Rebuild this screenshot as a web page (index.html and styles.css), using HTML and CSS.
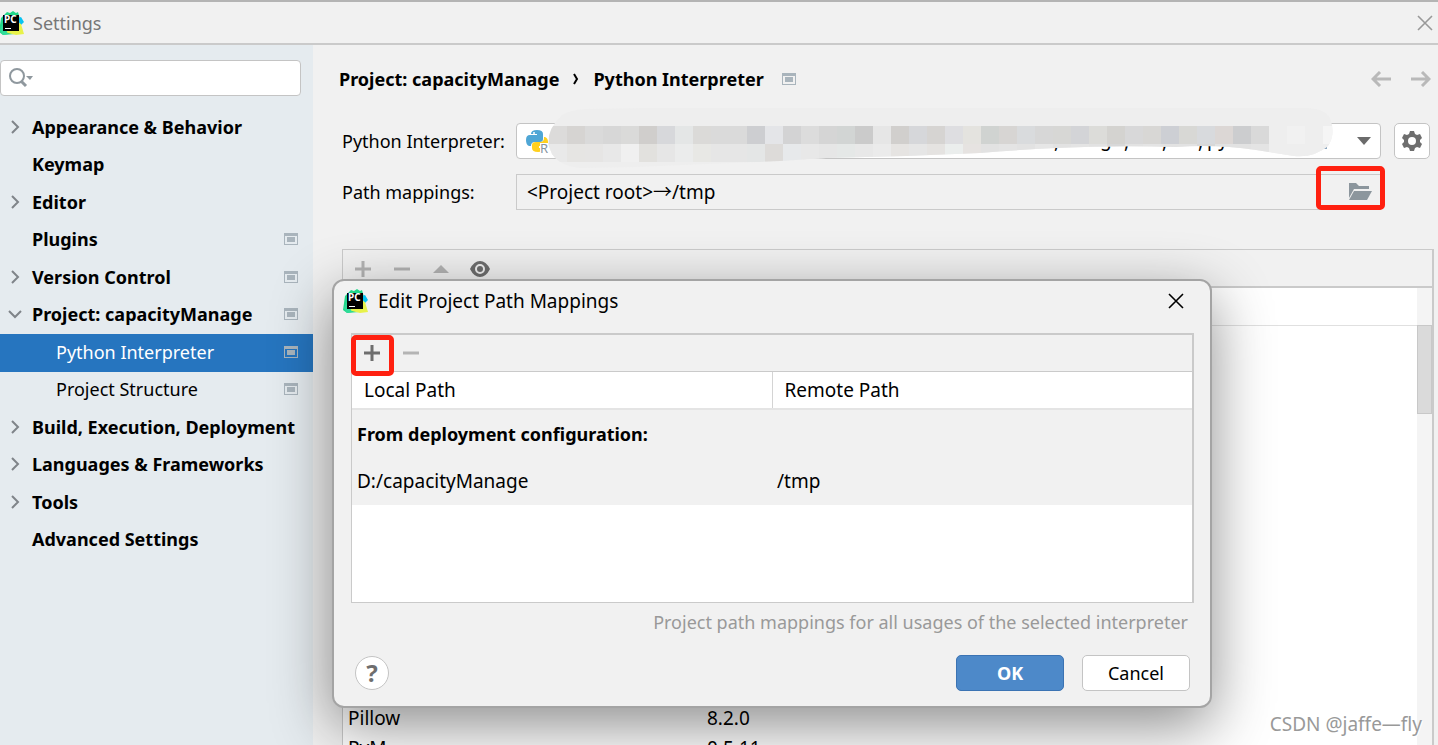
FILE: index.html
```html
<!DOCTYPE html>
<html lang="en">
<head>
    <meta charset="UTF-8">
    <meta name="viewport" content="width=device-width, initial-scale=1.0">
    <title>Settings</title>
    <link rel="stylesheet" href="styles.css">
</head>
<body>
    <!-- shared icons -->
    <svg class="defs" aria-hidden="true">
        <symbol id="pycharm" viewBox="0 0 24 24" overflow="visible">
            <path d="M1 7 7 1l3 1 3-2 3 2 2-1 2 7-5 15-12 1-4-3z" fill="#21d789"/>
            <path d="M18 7l3-1 3 5-4 4z" fill="#07c3f2"/>
            <path d="M19 12l2 1 3 10-8 1-8-2-5 1-1-3 14-3z" fill="#e8f24a"/>
            <path d="M0 19l3-7 5 11-5 1z" fill="#2fdc9a"/>
            <rect x="3" y="4" width="16" height="16"/>
            <text x="4" y="12" font-size="10" font-weight="700" fill="#fff">PC</text>
            <path d="M5 17h6v1H5z" fill="#fff"/>
        </symbol>
        <symbol id="win" viewBox="0 0 14 12">
            <path d="M0 0h14v12H0zM1 3v8h12V3z" fill="#a9b4bc" fill-rule="evenodd"/>
            <path d="M3 4h8v5H3z" fill="#a9b4bc"/>
        </symbol>
        <symbol id="right" viewBox="0 0 14 14">
            <path d="M4 1l6 6-6 6" fill="none" stroke="#7f8489" stroke-width="2"/>
        </symbol>
        <symbol id="down" viewBox="0 0 14 14">
            <path d="M1 4l6 6 6-6" fill="none" stroke="#7f8489" stroke-width="2"/>
        </symbol>
        <symbol id="plus" viewBox="0 0 16 16">
            <path d="M8 0v16M0 8h16" fill="none" stroke="currentColor" stroke-width="3"/>
        </symbol>
        <symbol id="minus" viewBox="0 0 16 16">
            <path d="M0 8h16" fill="none" stroke="currentColor" stroke-width="3"/>
        </symbol>
        <symbol id="close" viewBox="0 0 16 16">
            <path d="M1 1l14 14M15 1L1 15" fill="none" stroke="currentColor" stroke-width="1.6"/>
        </symbol>
    </svg>

    <header class="titlebar">
        <svg class="logo"><use href="#pycharm"/></svg>
        <h1>Settings</h1>
        <button class="close" aria-label="Close"><svg><use href="#close"/></svg></button>
    </header>

    <div class="main">
        <nav class="sidebar">
            <label class="search">
                <svg viewBox="0 0 26 20">
                    <circle cx="9" cy="8" r="7" fill="none" stroke="#8f989e" stroke-width="2"/>
                    <path d="M13 13l5 5" stroke="#8f989e" stroke-width="3"/>
                    <path d="M18 8h7l-3 4z" fill="#8f989e"/>
                </svg>
                <input type="text" aria-label="Search settings">
            </label>
            <ul class="tree">
                <li><svg class="arrow"><use href="#right"/></svg><a href="#">Appearance &amp; Behavior</a></li>
                <li><a href="#">Keymap</a></li>
                <li><svg class="arrow"><use href="#right"/></svg><a href="#">Editor</a></li>
                <li><a href="#">Plugins</a><svg class="win"><use href="#win"/></svg></li>
                <li><svg class="arrow"><use href="#right"/></svg><a href="#">Version Control</a><svg class="win"><use href="#win"/></svg></li>
                <li><svg class="arrow"><use href="#down"/></svg><a href="#">Project: capacityManage</a><svg class="win"><use href="#win"/></svg></li>
                <li class="child selected"><a href="#">Python Interpreter</a><svg class="win"><use href="#win"/></svg></li>
                <li class="child"><a href="#">Project Structure</a><svg class="win"><use href="#win"/></svg></li>
                <li><svg class="arrow"><use href="#right"/></svg><a href="#">Build, Execution, Deployment</a></li>
                <li><svg class="arrow"><use href="#right"/></svg><a href="#">Languages &amp; Frameworks</a></li>
                <li><svg class="arrow"><use href="#right"/></svg><a href="#">Tools</a></li>
                <li><a href="#">Advanced Settings</a></li>
            </ul>
        </nav>

        <main class="content">
            <div class="crumbs">
                <a href="#">Project: capacityManage</a>
                <svg class="sep" viewBox="0 0 6 12"><path d="M1 1l3 5-3 5" fill="none" stroke="#000" stroke-width="2"/></svg>
                <h2>Python Interpreter</h2>
                <svg class="win"><use href="#win"/></svg>
                <div class="history">
                    <button aria-label="Back"><svg viewBox="0 0 20 16"><path d="M20 8H2M9 1L2 8l7 7" fill="none" stroke="#b9b9b9" stroke-width="3"/></svg></button>
                    <button aria-label="Forward"><svg viewBox="0 0 20 16"><path d="M0 8h18M11 1l7 7-7 7" fill="none" stroke="#b9b9b9" stroke-width="3"/></svg></button>
                </div>
            </div>

            <div class="form">
                <label for="interpreter">Python Interpreter:</label>
                <div class="combo">
                    <select id="interpreter"><option></option></select>
                    <svg class="python" viewBox="0 0 24 26">
                        <path d="M5 5q0-4 6-4t6 4v5q0 3-3 3H9q-4 0-4 4H3q-3-1-3-6t4-5h7V5z" fill="#4fa6d5"/>
                        <path d="M18 8h1q3 1 3 5v4h-9v2h4v1q0 3-5 3-6 0-6-4v-3q0-3 4-3h4q4 0 4-4z" fill="#ffd01e"/>
                        <circle cx="8" cy="4" r="1" fill="#fff"/>
                        <path d="M14 14h10v12H14z" fill="#fff"/>
                        <text x="14" y="24" font-size="13" fill="#8795a1">R</text>
                    </svg>
                    <svg class="caret" viewBox="0 0 14 8"><path d="M0 0h14L7 8z" fill="#6b6b6b"/></svg>
                    <svg class="smudge" viewBox="0 0 820 64">
                        <clipPath id="brush"><path id="stroke" d="M32 36Q32 20 46 7Q54 2 70 1L130 0H790Q808 0 814 10Q820 26 812 38Q798 50 778 48L740 42Q700 36 660 39Q600 37 540 40Q500 42 464 45L390 48 310 50 264 53 190 56 120 59 64 60Q44 58 36 46z"/></clipPath>
                        <g font-size="19">
                            <text x="538" y="40">,</text>
                            <text x="584" y="38">g</text>
                            <text x="608" y="40">,</text>
                            <text x="646" y="40">,</text>
                            <text x="682" y="40">,</text>
                            <text x="691" y="38">py</text>
                        </g>
                        <path d="M810 34v6h-4" fill="none" stroke="#8fa8c0" stroke-width="2"/>
                        <use href="#stroke" fill="#eeeeee"/>
                        <g id="mosaic" clip-path="url(#brush)"></g>
                    </svg>
                </div>
                <button class="gear" aria-label="Interpreter settings">
                    <svg viewBox="0 0 20 20">
                        <path d="M8 0h4l1 3 2 1 3-1 2 4-2 2v2l2 2-2 4-3-1-2 1-1 3H8l-1-3-2-1-3 1-2-4 2-2V9L0 7l2-4 3 1 2-1zM10 6a4 4 0 1 0 0 8 4 4 0 0 0 0-8z" fill="#6e6e6e" fill-rule="evenodd"/>
                    </svg>
                </button>

                <label for="mappings">Path mappings:</label>
                <div class="path">
                    <input id="mappings" type="text" value="&lt;Project root&gt;→/tmp" readonly>
                    <button class="browse" aria-label="Browse">
                        <svg viewBox="0 0 24 18"><path d="M1 0h7l3 3h10v3H6L1 15z" fill="#8c969d"/><path d="M6 8h18l-5 9H1z" fill="#8c969d"/></svg>
                    </button>
                    <span class="mark"></span>
                </div>
            </div>

            <section class="packages">
                <div class="toolbar">
                    <button aria-label="Install"><svg><use href="#plus"/></svg></button>
                    <button aria-label="Uninstall"><svg><use href="#minus"/></svg></button>
                    <button aria-label="Upgrade"><svg viewBox="0 0 16 16"><path d="M8 4l8 8H0z" fill="currentColor"/></svg></button>
                    <button class="eye" aria-label="Show early releases">
                        <svg viewBox="0 0 20 16"><path d="M0 8Q4 0 10 0t10 8q-4 8-10 8T0 8zM10 3a5 5 0 1 0 0 10 5 5 0 0 0 0-10z" fill="#6e6e6e" fill-rule="evenodd"/><circle cx="10" cy="8" r="3" fill="#6e6e6e"/></svg>
                    </button>
                </div>
                <div class="list">
                    <table>
                        <thead>
                            <tr><th class="name"></th><th></th></tr>
                        </thead>
                        <tbody>
                            <tr class="covered"><td colspan="2"></td></tr>
                            <tr><td>Pillow</td><td>8.2.0</td></tr>
                            <tr><td>PyM</td><td>0.5.11</td></tr>
                        </tbody>
                    </table>
                    <div class="scroll"><div class="thumb"></div></div>
                </div>
            </section>
        </main>
    </div>

    <div class="dialog" role="dialog" aria-labelledby="dialog-title">
        <div class="dialog-title">
            <svg class="logo"><use href="#pycharm"/></svg>
            <h2 id="dialog-title">Edit Project Path Mappings</h2>
            <button class="close" aria-label="Close dialog"><svg><use href="#close"/></svg></button>
        </div>
        <div class="mappings">
            <div class="toolbar">
                <button class="add" aria-label="Add"><svg><use href="#plus"/></svg><span class="mark"></span></button>
                <button aria-label="Remove"><svg><use href="#minus"/></svg></button>
            </div>
            <table>
                <thead>
                    <tr><th>Local Path</th><th>Remote Path</th></tr>
                </thead>
                <tbody>
                    <tr><td colspan="2"><b>From deployment configuration:</b></td></tr>
                    <tr><td>D:/capacityManage</td><td>/tmp</td></tr>
                </tbody>
            </table>
        </div>
        <p class="hint">Project path mappings for all usages of the selected interpreter</p>
        <div class="buttons">
            <button class="help" aria-label="Help">?</button>
            <button class="ok">OK</button>
            <button class="cancel">Cancel</button>
        </div>
    </div>

    <div class="watermark">CSDN @jaffe—fly</div>

    <script src="script.js"></script>
</body>
</html>
```
FILE: styles.css
```css
* {
    box-sizing: border-box;
}

body {
    margin: 0;
    height: 100vh;
    display: flex;
    flex-direction: column;
    overflow: hidden;
    position: relative;
    background: #f1f1f1;
    color: #000;
    font: 18px/24px "Noto Sans", "Noto Sans CJK SC", sans-serif;
}

h1, h2, p, ul {
    margin: 0;
    padding: 0;
    font-size: inherit;
    font-weight: normal;
}

a {
    color: inherit;
    text-decoration: none;
}

button, input, select {
    font: inherit;
    color: inherit;
}

button {
    padding: 0;
    border: 0;
    background: none;
    display: flex;
    align-items: center;
    justify-content: center;
}

svg {
    display: block;
    flex: none;
}

.defs {
    position: absolute;
    width: 0;
    height: 0;
}

.logo {
    width: 24px;
    height: 24px;
    overflow: visible;
}

.win {
    width: 14px;
    height: 12px;
}

.close svg {
    width: 16px;
    height: 16px;
}

/* title bar */
.titlebar {
    flex: none;
    height: 45px;
    display: flex;
    align-items: center;
    gap: 9px;
    padding-right: 5px;
    border-top: 2px solid #b4b4b4;
    border-bottom: 2px solid #cacaca;
    color: #777;
}

.titlebar .close,
.dialog-title .close {
    margin-left: auto;
}

.titlebar .close {
    color: #999;
}

.main {
    flex: 1;
    min-height: 0;
    display: flex;
}

/* left tree */
.sidebar {
    flex: none;
    width: 313px;
    padding-top: 15px;
    background: #e5ebef;
}

.search {
    display: flex;
    align-items: center;
    height: 36px;
    margin-right: 12px;
    padding-left: 7px;
    background: #fff;
    border: 1px solid #c4c4c4;
    border-radius: 4px;
}

.search svg {
    width: 26px;
    height: 20px;
}

.search input {
    flex: 1;
    min-width: 0;
    border: 0;
    background: none;
    outline: none;
}

.tree {
    display: grid;
    grid-template-columns: minmax(0, 1fr);
    grid-auto-rows: 1fr;
    height: 450px;
    margin-top: 13px;
    list-style: none;
    font-weight: bold;
}

.tree li {
    display: flex;
    align-items: center;
    padding: 0 15px 2px 32px;
}

.tree .arrow {
    width: 14px;
    height: 14px;
    margin: 0 10px 0 -24px;
}

.tree a {
    white-space: nowrap;
}

.tree .win {
    margin-left: auto;
}

.tree .child {
    padding-left: 56px;
    font-weight: normal;
}

.tree .selected {
    background: #2675bf;
    color: #fff;
}

/* right page */
.content {
    flex: 1;
    min-width: 0;
    display: flex;
    flex-direction: column;
    padding: 22px 4px 0 26px;
}

.crumbs {
    display: flex;
    align-items: center;
    font-weight: bold;
}

.crumbs h2 {
    font-weight: bold;
}

.crumbs .sep {
    width: 6px;
    height: 12px;
    margin: 0 14px;
}

.crumbs .win {
    margin-left: 18px;
}

.history {
    display: flex;
    gap: 20px;
    margin: 0 3px 0 auto;
}

.history svg {
    width: 20px;
    height: 16px;
}

.form {
    display: grid;
    grid-template-columns: 174px 1fr 36px;
    gap: 15px 0;
    align-items: center;
    margin: 32px 4px 0 3px;
}

.combo,
.path {
    position: relative;
    height: 36px;
    margin-right: 13px;
}

.combo select {
    width: 100%;
    height: 36px;
    appearance: none;
    background: #fff;
    border: 1px solid #c4c4c4;
    border-radius: 4px;
}

.combo .python {
    position: absolute;
    left: 10px;
    top: 6px;
    width: 24px;
    height: 26px;
}

.combo .caret {
    position: absolute;
    right: 10px;
    top: 14px;
    width: 14px;
    height: 8px;
}

.combo .smudge {
    position: absolute;
    left: 0;
    top: -15px;
    width: 820px;
    height: 64px;
    pointer-events: none;
}

.gear {
    width: 36px;
    height: 36px;
    background: #fff;
    border: 1px solid #c4c4c4;
    border-radius: 5px;
}

.gear svg {
    width: 20px;
    height: 20px;
}

.path {
    display: flex;
    border: 1px solid #cacaca;
}

.path input {
    flex: 1;
    min-width: 0;
    padding: 0 10px;
    border: 0;
    background: none;
    outline: none;
    font-size: 19px;
}

.browse {
    width: 40px;
}

.browse svg {
    width: 24px;
    height: 18px;
}

.mark {
    position: absolute;
    border: 5px solid #ff2010;
    border-radius: 5px;
}

.path .mark {
    right: -5px;
    top: -9px;
    width: 69px;
    height: 44px;
}

.packages {
    flex: 1;
    min-height: 0;
    display: flex;
    flex-direction: column;
    margin: 39px 0 0 3px;
    border: 1px solid #cacaca;
    border-right-width: 2px;
    border-bottom: 0;
}

.toolbar {
    flex: none;
    display: flex;
    align-items: center;
    gap: 23px;
    height: 38px;
    padding-left: 12px;
    color: #b4b4b4;
}

.toolbar svg {
    width: 16px;
    height: 16px;
}

.toolbar .eye {
    margin-left: -2px;
}

.toolbar .eye svg {
    width: 20px;
}

.packages .toolbar {
    padding-top: 2px;
    border-bottom: 2px solid #cacaca;
}

.list {
    flex: 1;
    min-height: 0;
    display: flex;
    overflow: hidden;
    background: #fff;
}

.list table {
    flex: 1;
    align-self: flex-start;
    table-layout: fixed;
    border-collapse: collapse;
    font-size: 19px;
}

.list th {
    height: 37px;
    padding: 0;
    border-bottom: 1px solid #e0e0e0;
}

.list .name {
    width: 359px;
}

.list td {
    height: 30px;
    padding: 0 5px;
}

/* rows scrolled under the dialog */
.list .covered td {
    height: 378px;
}

.scroll {
    width: 15px;
    padding-top: 37px;
    background: #f4f4f4;
}

.thumb {
    height: 89px;
    background: #dadada;
    border: 1px solid #c8c8c8;
}

/* dialog */
.dialog {
    position: absolute;
    left: 332px;
    right: 226px;
    top: 279px;
    padding: 0 16px 15px 17px;
    background: #f1f1f1;
    border: 2px solid #a4a4a4;
    border-radius: 12px;
    box-shadow: 0 18px 60px rgba(0, 0, 0, 0.45);
}

.dialog-title {
    display: flex;
    align-items: center;
    gap: 10px;
    height: 40px;
    margin: 0 10px 12px -7px;
    font-size: 19px;
}

.mappings {
    height: 270px;
    background: #fff;
    border: 1px solid #cacaca;
    border-top-width: 2px;
    border-right-width: 2px;
}

.mappings .toolbar {
    height: 37px;
    background: #f1f1f1;
    border-bottom: 1px solid #cacaca;
}

.mappings .add {
    position: relative;
    color: #6e6e6e;
}

.add .mark {
    left: -13px;
    top: -10px;
    width: 43px;
    height: 41px;
}

.mappings table {
    width: 100%;
    table-layout: fixed;
    border-collapse: collapse;
    font-size: 19px;
}

.mappings b {
    font-size: 18px;
}

.mappings th {
    height: 37px;
    padding: 0 12px;
    font-weight: normal;
    text-align: left;
    border-bottom: 2px solid #e4e4e4;
}

.mappings th + th {
    border-left: 1px solid #d4d4d4;
}

.mappings td {
    height: 48px;
    padding: 0 5px;
    background: #f1f1f1;
}

.hint {
    margin-top: 7px;
    padding-right: 6px;
    text-align: right;
    color: #999;
}

.buttons {
    display: flex;
    align-items: center;
    gap: 18px;
    margin-top: 21px;
    padding: 0 4px;
}

.buttons button {
    width: 108px;
    height: 36px;
    background: #fff;
    border: 1px solid #c4c4c4;
    border-radius: 5px;
}

.buttons .help {
    width: 34px;
    height: 34px;
    margin-right: auto;
    border-radius: 50%;
    color: #6e6e6e;
    font-size: 24px;
    font-weight: bold;
}

.buttons .ok {
    background: #4d89c9;
    border-color: #3b73b3;
    color: #fff;
    font-weight: bold;
}

.watermark {
    position: absolute;
    right: 16px;
    bottom: 9px;
    color: #999;
    font-size: 19px;
    text-shadow: 1px 1px 0 #fff;
}
```
FILE: script.js
```js
var svgNS = "http://www.w3.org/2000/svg";
var mosaic = document.getElementById("mosaic");

// two rows of 18px blocks
var rows = [
    "dcdbda d6d4d2 dadada d7d7d7 dadad9 d0cecc d7d8db e4e6e6 dbdad8 dadada dadada cdced1 e4e5e8 d3d3d4 dcdcdc d5d5d5 d2d5d4 cbcbcb e6e6e6 d1cfcd d6d7da d6d4d2 dedee1 e4e3df d0d3d1 d7d5d3 d9dbdd d7d7d7 d7d7d5 d3d4d7 dcdcd9 d4d3d0 d8d8d9 d8d7d5 cdcfd4 d8d8d5 d8dadd dcd7d5 cccdcf d9d9d9 eeeeee f1f1f1 eeeeee f5f5f5",
    "e9e9e9 e6e5e3 e6e5e4 e8e8e8 f0f0f0 e2e1de e6e6e6 ebecec e8e8e5 e6e6e6 e6e6e6 e4e6e6 dddbd9 e7e9eb e8e8e8 e6e6e6 e5e8e7 e8e8e8 ebebeb e6e4e2 e6e6e6 e5e3e1 ebeeed e6e3e1 e2e2e2 e4e4e4 e2e2e2 e6e6e6 e2e2e2 e4e4e4 e2e2e2 d8d8d8 e2e2e2 e4e4e4 e2e2e2 e2e2e2 d8d8d8 e2e2e2 e2e2e2 e4e4e4 eeeeee eeeeee eeeeee eeeeee"
];

function drawMosaic() {
    rows.forEach(function(row, y) {
        row.split(" ").forEach(function(color, x) {
            var block = document.createElementNS(svgNS, "rect");
            block.setAttribute("x", 33 + x * 18);
            block.setAttribute("y", 18 + y * 18);
            block.setAttribute("width", 18);
            block.setAttribute("height", 18);
            block.setAttribute("fill", "#" + color);
            mosaic.appendChild(block);
        });
    });
}
drawMosaic();
```
